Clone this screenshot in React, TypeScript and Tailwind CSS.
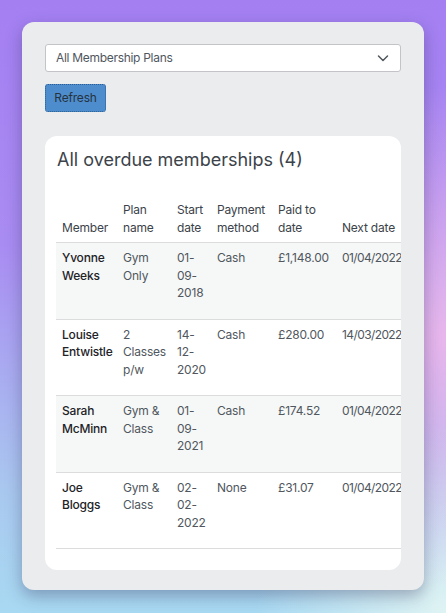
import React from 'react'

interface Row {
  member: string[]
  plan: string[]
  start: string[]
  method: string
  paid: string
  next: string
}

const rows: Row[] = [
  { member: ['Yvonne', 'Weeks'], plan: ['Gym', 'Only'], start: ['01-', '09-', '2018'], method: 'Cash', paid: '£1,148.00', next: '01/04/2022' },
  { member: ['Louise', 'Entwistle'], plan: ['2', 'Classes', 'p/w'], start: ['14-', '12-', '2020'], method: 'Cash', paid: '£280.00', next: '14/03/2022' },
  { member: ['Sarah', 'McMinn'], plan: ['Gym &', 'Class'], start: ['01-', '09-', '2021'], method: 'Cash', paid: '£174.52', next: '01/04/2022' },
  { member: ['Joe', 'Bloggs'], plan: ['Gym &', 'Class'], start: ['02-', '02-', '2022'], method: 'None', paid: '£31.07', next: '01/04/2022' },
]

const Lines: React.FC<{ lines: string[] }> = ({ lines }) => (
  <>
    {lines.map((l, i) => (
      <div key={i} className="whitespace-nowrap">
        {l}
      </div>
    ))}
  </>
)

const App: React.FC = () => {
  return (
    <div
      className="w-full min-h-[613px] p-[22px] font-['Inter','Noto_Sans',sans-serif] bg-[radial-gradient(circle_at_100%_55%,#e8b6ec_0%,rgba(232,182,236,0)_45%),radial-gradient(circle_at_100%_100%,#dff3f3_0%,rgba(223,243,243,0)_25%),linear-gradient(180deg,#a47ff2_0%,#a98cf2_40%,#a9c8ef_80%,#a8d9f2_100%)]"
    >
      <div className="h-[568px] rounded-[12px] bg-[#ebecee] px-[23px] pt-[22px] shadow-[0_6px_16px_rgba(40,40,80,0.35)]">
        <div className="flex h-[28px] items-center justify-between rounded-[3px] border border-[#c3c4c7] bg-white pl-[10px] pr-[10px] text-[12px] tracking-[-0.3px] text-[#50575e]">
          <span>All Membership Plans</span>
          <svg width="14" height="14" viewBox="0 0 14 14" fill="none">
            <path d="M2.5 5 L7 9.5 L11.5 5" stroke="#50575e" strokeWidth="1.5" strokeLinecap="round" strokeLinejoin="round" />
          </svg>
        </div>

        <button className="mt-[12px] h-[28px] w-[61px] rounded-[3px] border border-dotted border-[#2b5d93] bg-[#4e8dcd] text-[12px] tracking-[-0.2px] text-[#26333f]">
          Refresh
        </button>

        <div className="mt-[24px] h-[434px] overflow-hidden rounded-[12px] bg-white pl-[11px] pt-[11px]">
          <h2 className="pl-[1px] text-[18px] leading-[26px] text-[#3c434a]">All overdue memberships (4)</h2>

          <table className="mt-[28px] w-[420px] table-fixed border-collapse text-[12px] leading-[17.5px] tracking-[-0.2px]">
            <colgroup>
              <col className="w-[61px]" />
              <col className="w-[54px]" />
              <col className="w-[40px]" />
              <col className="w-[61px]" />
              <col className="w-[64px]" />
              <col className="w-[140px]" />
            </colgroup>
            <thead>
              <tr className="border-b border-[#dcdcde] text-left align-bottom text-[#3c434a]">
                <th className="px-[6px] pb-[6px] font-normal">Member</th>
                <th className="px-[6px] pb-[6px] font-normal">
                  <Lines lines={['Plan', 'name']} />
                </th>
                <th className="px-[6px] pb-[6px] font-normal">
                  <Lines lines={['Start', 'date']} />
                </th>
                <th className="px-[6px] pb-[6px] font-normal">
                  <Lines lines={['Payment', 'method']} />
                </th>
                <th className="px-[6px] pb-[6px] font-normal">
                  <Lines lines={['Paid to', 'date']} />
                </th>
                <th className="px-[6px] pb-[6px] font-normal">Next date</th>
              </tr>
            </thead>
            <tbody>
              {rows.map((r, i) => (
                <tr
                  key={i}
                  className={`h-[76.5px] border-b border-[#dcdcde] align-top text-[#50575e] ${
                    i % 2 === 0 ? 'bg-[#f6f7f7]' : 'bg-white'
                  }`}
                >
                  <td className="px-[6px] pt-[6px] font-medium text-[#1d2327]">
                    <Lines lines={r.member} />
                  </td>
                  <td className="px-[6px] pt-[6px]">
                    <Lines lines={r.plan} />
                  </td>
                  <td className="px-[6px] pt-[6px]">
                    <Lines lines={r.start} />
                  </td>
                  <td className="px-[6px] pt-[6px]">{r.method}</td>
                  <td className="px-[6px] pt-[6px]">{r.paid}</td>
                  <td className="px-[6px] pt-[6px] tracking-[-0.6px]">{r.next}</td>
                </tr>
              ))}
            </tbody>
          </table>
        </div>
      </div>
    </div>
  )
}

export default App
